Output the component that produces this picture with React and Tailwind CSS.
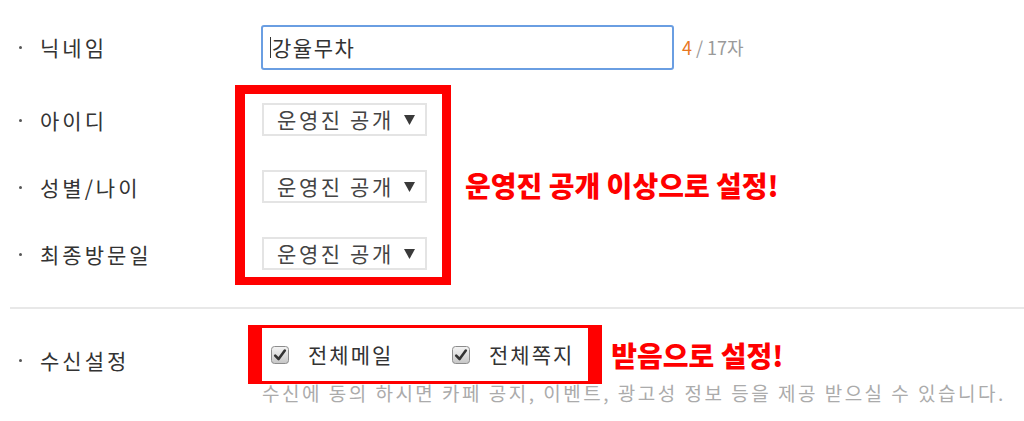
import React from 'react';

const Label = ({ children, className = '' }) => (
    <div className={`flex items-center h-[33px] ${className}`}>
        <span className="ml-[19px] mr-[18px] w-[3px] h-[3px] rounded-full bg-[#555]" />
        <span className="text-[21px] tracking-[3px] text-[#333]">{children}</span>
    </div>
);

const SelectBox = ({ value }) => (
    <div className="w-[165px] h-[33px] border-2 border-[#e4e4e4] bg-white flex items-center pl-[13px] pr-[10px]">
        <span className="text-[21px] tracking-[2.6px] text-[#444]">{value}</span>
        <svg className="ml-auto" width="11" height="10" viewBox="0 0 11 10">
            <polygon points="0,0 11,0 5.5,10" fill="#3a3a3a" />
        </svg>
    </div>
);

const CheckIcon = () => (
    <svg width="18" height="18" viewBox="0 0 18 18">
        <defs>
            <linearGradient id="cbg" x1="0" y1="0" x2="0" y2="1">
                <stop offset="0" stopColor="#f5f5f5" />
                <stop offset="1" stopColor="#c6c6c6" />
            </linearGradient>
        </defs>
        <rect x="0.5" y="0.5" width="17" height="17" rx="3" fill="url(#cbg)" stroke="#8c8c8c" />
        <path d="M4.2 9.6 L7.6 13 L13.8 4.6" fill="none" stroke="#333" strokeWidth="2.6" strokeLinecap="round" strokeLinejoin="round" />
    </svg>
);

const CheckItem = ({ label, className = '' }) => (
    <label className={`flex items-center ${className}`}>
        <CheckIcon />
        <span className="ml-[19px] text-[21px] tracking-[2px] text-[#333]">{label}</span>
    </label>
);

export default function App() {
    return (
        <div className="w-[1024px] h-[421px] overflow-hidden bg-white font-['Noto_Sans_CJK_KR','Noto_Sans',sans-serif]">
            {/* nickname */}
            <div className="flex items-center pt-[25px]">
                <Label className="w-[261px] h-[45px]">닉네임</Label>
                <div className="w-[413px] h-[45px] border-2 border-[#6a9ee2] rounded-[3px] flex items-center pl-[7px]">
                    <span className="w-px h-[21px] bg-[#333] mr-[1px]" />
                    <span className="text-[21px] tracking-[1.5px] text-[#333]">강율무차</span>
                </div>
                <span className="ml-[8px] text-[18px]">
                    <span className="text-[#e8771f]">4</span>
                    <span className="text-[#9a9a9a]"> / 17자</span>
                </span>
            </div>

            {/* privacy selects */}
            <div className="flex items-center mt-[15px]">
                <div className="w-[235px] self-start flex flex-col gap-[34px] pt-[19px]">
                    <Label>아이디</Label>
                    <Label>성별/나이</Label>
                    <Label>최종방문일</Label>
                </div>
                <div className="border-[9px] border-l-[10px] border-b-[8px] border-[#ff0000] pt-[9px] pb-[7px] pl-[17px] pr-[15px] flex flex-col gap-[34px]">
                    <SelectBox value="운영진 공개" />
                    <SelectBox value="운영진 공개" />
                    <SelectBox value="운영진 공개" />
                </div>
                <span className="ml-[14px] text-[28px] font-black text-[#ff0000] leading-none">운영진 공개 이상으로 설정!</span>
            </div>

            <div className="ml-[10px] mt-[22px] h-[2px] bg-[#e8e8e8]" />

            {/* receive settings */}
            <div className="flex mt-[16px]">
                <Label className="w-[248px] mt-[19px]">수신설정</Label>
                <div className="flex flex-col">
                    <div className="flex items-center">
                        <div className="h-[59px] border-y-[3px] border-x-[14px] border-[#ff0000] flex items-center pl-[9px] pr-[14px]">
                            <CheckItem label="전체메일" className="w-[181px]" />
                            <CheckItem label="전체쪽지" />
                        </div>
                        <span className="ml-[9px] text-[28px] font-black text-[#ff0000] leading-none">받음으로 설정!</span>
                    </div>
                    <p className="ml-[14px] text-[19px] leading-[18px] tracking-[2.5px] text-[#ababab]">
                        수신에 동의 하시면 카페 공지, 이벤트, 광고성 정보 등을 제공 받으실 수 있습니다.
                    </p>
                </div>
            </div>
        </div>
    );
}
